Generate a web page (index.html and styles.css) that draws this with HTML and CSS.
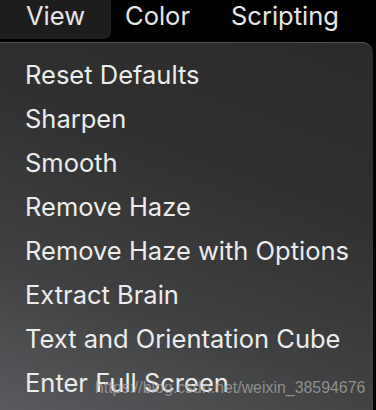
FILE: index.html
```html
<!DOCTYPE html>
<html>
<head>
<meta charset="utf-8">
<link rel="stylesheet" href="styles.css">
</head>
<body>
<div class="menubar">
  <div class="mb-item active">View</div>
  <div class="mb-item color">Color</div>
  <div class="mb-item script">Scripting</div>
</div>
<div class="menu">
  <div class="mi">Reset Defaults</div>
  <div class="mi">Sharpen</div>
  <div class="mi">Smooth</div>
  <div class="mi">Remove Haze</div>
  <div class="mi">Remove Haze with Options</div>
  <div class="mi">Extract Brain</div>
  <div class="mi">Text and Orientation Cube</div>
  <div class="mi">Enter Full Screen</div>
  <div class="watermark">https://blog.csdn.net/weixin_38594676</div>
</div>
</body>
</html>
```
FILE: styles.css
```css
html, body {
  margin: 0;
  padding: 0;
  background: #000;
  width: 376px;
  height: 410px;
  overflow: hidden;
  font-family: Inter, "Liberation Sans", sans-serif;
}
.menubar {
  display: flex;
  height: 39px;
  align-items: stretch;
}
.mb-item {
  color: #e6e6e6;
  font-size: 25.5px;
  line-height: 32px;
  white-space: nowrap;
}
.mb-item.active {
  background: #1d1d1d;
  border-bottom-right-radius: 7px;
  width: 111px;
  box-sizing: border-box;
  padding-left: 26px;
}
.mb-item.color { padding-left: 14px; width: 120px; box-sizing: border-box; }
.menu {
  position: relative;
  margin-top: 3px;
  width: 373px;
  height: 372px;
  border-top: 1.5px solid #4f4f4f;
  border-top-right-radius: 11px;
  background: linear-gradient(200deg, #2b2b2b 0%, #303030 35%, #404142 70%, #5a5b5e 100%);
  padding-top: 10px;
  box-sizing: border-box;
}
.mi {
  color: #ececec;
  font-size: 25.5px;
  height: 44px;
  line-height: 44px;
  padding-left: 25px;
  white-space: nowrap;
}
.watermark {
  position: absolute;
  left: 95px;
  top: 336px;
  font-size: 15.9px;
  color: rgba(170,170,170,0.75);
  font-family: "Liberation Sans", Arial, sans-serif;
  white-space: nowrap;
}
```
